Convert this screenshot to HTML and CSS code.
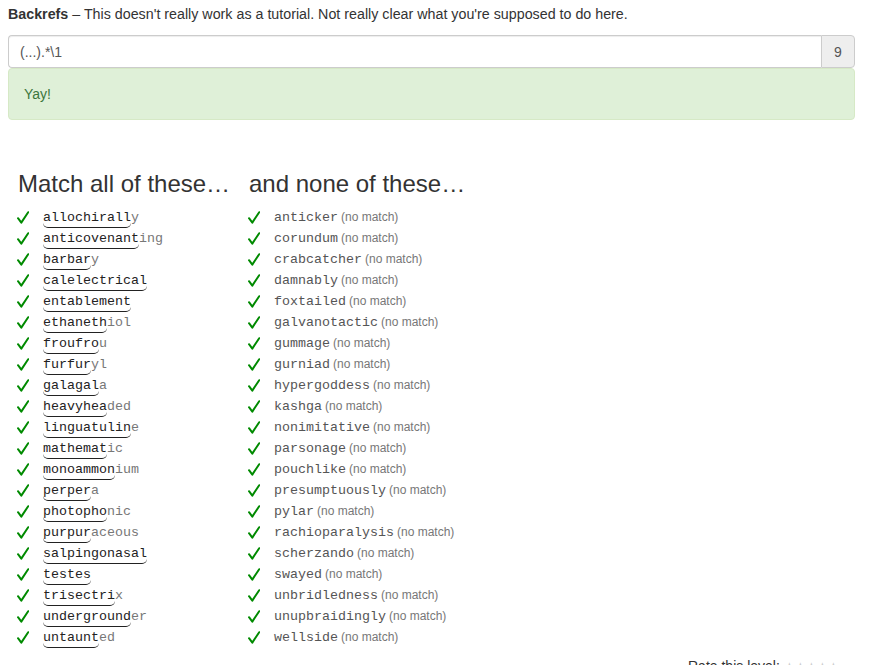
FILE: index.html
```html
<!DOCTYPE html>
<html>
<head>
<meta charset="utf-8">
<link rel="stylesheet" href="styles.css">
</head>
<body>
<p class="intro"><b>Backrefs</b> – This doesn't really work as a tutorial. Not really clear what you're supposed to do here.</p>
<div class="input-group">
  <div class="form-control">(...).*\1</div>
  <div class="addon">9</div>
</div>
<div class="alert">Yay!</div>

<svg width="0" height="0" class="defs">
  <symbol id="chk" viewBox="0 0 12 13">
    <path d="M1 7.2 L4.3 11.6 L11.2 1.2" fill="none" stroke="#008a00" stroke-width="2" stroke-linecap="round" stroke-linejoin="round"/>
  </symbol>
</svg>

<div class="columns">
  <div class="col col-match">
    <h3>Match all of these…</h3>
    <ul>
      <li><svg class="ok"><use href="#chk"/></svg><span class="w"><span class="m">allochirall</span>y</span></li>
      <li><svg class="ok"><use href="#chk"/></svg><span class="w"><span class="m">anticovenant</span>ing</span></li>
      <li><svg class="ok"><use href="#chk"/></svg><span class="w"><span class="m">barbar</span>y</span></li>
      <li><svg class="ok"><use href="#chk"/></svg><span class="w"><span class="m">calelectrical</span></span></li>
      <li><svg class="ok"><use href="#chk"/></svg><span class="w"><span class="m">entablement</span></span></li>
      <li><svg class="ok"><use href="#chk"/></svg><span class="w"><span class="m">ethaneth</span>iol</span></li>
      <li><svg class="ok"><use href="#chk"/></svg><span class="w"><span class="m">froufro</span>u</span></li>
      <li><svg class="ok"><use href="#chk"/></svg><span class="w"><span class="m">furfur</span>yl</span></li>
      <li><svg class="ok"><use href="#chk"/></svg><span class="w"><span class="m">galagal</span>a</span></li>
      <li><svg class="ok"><use href="#chk"/></svg><span class="w"><span class="m">heavyhea</span>ded</span></li>
      <li><svg class="ok"><use href="#chk"/></svg><span class="w"><span class="m">linguatulin</span>e</span></li>
      <li><svg class="ok"><use href="#chk"/></svg><span class="w"><span class="m">mathemat</span>ic</span></li>
      <li><svg class="ok"><use href="#chk"/></svg><span class="w"><span class="m">monoammon</span>ium</span></li>
      <li><svg class="ok"><use href="#chk"/></svg><span class="w"><span class="m">perper</span>a</span></li>
      <li><svg class="ok"><use href="#chk"/></svg><span class="w"><span class="m">photopho</span>nic</span></li>
      <li><svg class="ok"><use href="#chk"/></svg><span class="w"><span class="m">purpur</span>aceous</span></li>
      <li><svg class="ok"><use href="#chk"/></svg><span class="w"><span class="m">salpingonasal</span></span></li>
      <li><svg class="ok"><use href="#chk"/></svg><span class="w"><span class="m">testes</span></span></li>
      <li><svg class="ok"><use href="#chk"/></svg><span class="w"><span class="m">trisectri</span>x</span></li>
      <li><svg class="ok"><use href="#chk"/></svg><span class="w"><span class="m">underground</span>er</span></li>
      <li><svg class="ok"><use href="#chk"/></svg><span class="w"><span class="m">untaunt</span>ed</span></li>
    </ul>
  </div>
  <div class="col col-none">
    <h3>and none of these…</h3>
    <ul>
      <li><svg class="ok"><use href="#chk"/></svg><span class="w n">anticker</span> <span class="nm">(no match)</span></li>
      <li><svg class="ok"><use href="#chk"/></svg><span class="w n">corundum</span> <span class="nm">(no match)</span></li>
      <li><svg class="ok"><use href="#chk"/></svg><span class="w n">crabcatcher</span> <span class="nm">(no match)</span></li>
      <li><svg class="ok"><use href="#chk"/></svg><span class="w n">damnably</span> <span class="nm">(no match)</span></li>
      <li><svg class="ok"><use href="#chk"/></svg><span class="w n">foxtailed</span> <span class="nm">(no match)</span></li>
      <li><svg class="ok"><use href="#chk"/></svg><span class="w n">galvanotactic</span> <span class="nm">(no match)</span></li>
      <li><svg class="ok"><use href="#chk"/></svg><span class="w n">gummage</span> <span class="nm">(no match)</span></li>
      <li><svg class="ok"><use href="#chk"/></svg><span class="w n">gurniad</span> <span class="nm">(no match)</span></li>
      <li><svg class="ok"><use href="#chk"/></svg><span class="w n">hypergoddess</span> <span class="nm">(no match)</span></li>
      <li><svg class="ok"><use href="#chk"/></svg><span class="w n">kashga</span> <span class="nm">(no match)</span></li>
      <li><svg class="ok"><use href="#chk"/></svg><span class="w n">nonimitative</span> <span class="nm">(no match)</span></li>
      <li><svg class="ok"><use href="#chk"/></svg><span class="w n">parsonage</span> <span class="nm">(no match)</span></li>
      <li><svg class="ok"><use href="#chk"/></svg><span class="w n">pouchlike</span> <span class="nm">(no match)</span></li>
      <li><svg class="ok"><use href="#chk"/></svg><span class="w n">presumptuously</span> <span class="nm">(no match)</span></li>
      <li><svg class="ok"><use href="#chk"/></svg><span class="w n">pylar</span> <span class="nm">(no match)</span></li>
      <li><svg class="ok"><use href="#chk"/></svg><span class="w n">rachioparalysis</span> <span class="nm">(no match)</span></li>
      <li><svg class="ok"><use href="#chk"/></svg><span class="w n">scherzando</span> <span class="nm">(no match)</span></li>
      <li><svg class="ok"><use href="#chk"/></svg><span class="w n">swayed</span> <span class="nm">(no match)</span></li>
      <li><svg class="ok"><use href="#chk"/></svg><span class="w n">unbridledness</span> <span class="nm">(no match)</span></li>
      <li><svg class="ok"><use href="#chk"/></svg><span class="w n">unupbraidingly</span> <span class="nm">(no match)</span></li>
      <li><svg class="ok"><use href="#chk"/></svg><span class="w n">wellside</span> <span class="nm">(no match)</span></li>
    </ul>
  </div>
</div>
<div class="rate">Rate this level: <span class="stars">★★★★★</span></div>
</body>
</html>
```
FILE: styles.css
```css
html, body {
  margin: 0;
  padding: 0;
  background: #fff;
}
body {
  padding: 0 16px 0 8px;
  font-family: "Liberation Sans", Arial, sans-serif;
  font-size: 14px;
  line-height: 20px;
  color: #333;
}
.defs {
  position: absolute;
  width: 0;
  height: 0;
}
.intro {
  margin: 0;
  padding-top: 4px;
  height: 35px;
  box-sizing: border-box;
  font-size: 14.28px;
}
.input-group {
  display: flex;
  height: 33px;
}
.form-control {
  flex: 1;
  box-sizing: border-box;
  height: 33px;
  padding: 6px 11px;
  font-size: 14px;
  line-height: 20px;
  color: #555;
  border: 1px solid #ccc;
  border-right: none;
  border-radius: 4px 0 0 4px;
  box-shadow: inset 0 1px 1px rgba(0,0,0,.075);
}
.addon {
  width: 34px;
  box-sizing: border-box;
  height: 33px;
  padding: 6px 0;
  text-align: center;
  font-size: 14px;
  line-height: 20px;
  color: #555;
  background: #eee;
  border: 1px solid #ccc;
  border-radius: 0 4px 4px 0;
}
.alert {
  padding: 15px;
  font-size: 14px;
  line-height: 20px;
  color: #3c763d;
  background: #dff0d8;
  border: 1px solid #d6e9c6;
  border-radius: 4px;
}
.columns {
  display: flex;
  margin-top: 50px;
}
.col {
  padding-left: 10px;
}
.col-match {
  width: 221px;
}
h3 {
  margin: 0 0 9px;
  font-size: 24px;
  font-weight: 500;
  line-height: 28px;
  color: #333;
}
ul {
  list-style: none;
  margin: 0;
  padding: 0;
}
li {
  display: flex;
  align-items: center;
  height: 21px;
  line-height: 21px;
  white-space: nowrap;
}
.ok {
  width: 12px;
  height: 13px;
  margin-left: -1px;
  margin-right: 14px;
  flex: none;
}
.w {
  font-family: "Liberation Mono", "Courier New", monospace;
  font-size: 13.33px;
  color: #777;
}
.w.n {
  color: #555;
}
.m {
  color: #222;
  border-bottom: 1px solid #222;
  border-radius: 0 0 5px 5px;
  padding-bottom: 2px;
}
.nm {
  font-size: 12px;
  color: #777;
  margin-left: 3px;
}
.rate {
  margin-top: 8px;
  padding-left: 680px;
  font-size: 14px;
  color: #333;
}
.stars {
  color: #ccc;
  font-size: 12px;
}
```
